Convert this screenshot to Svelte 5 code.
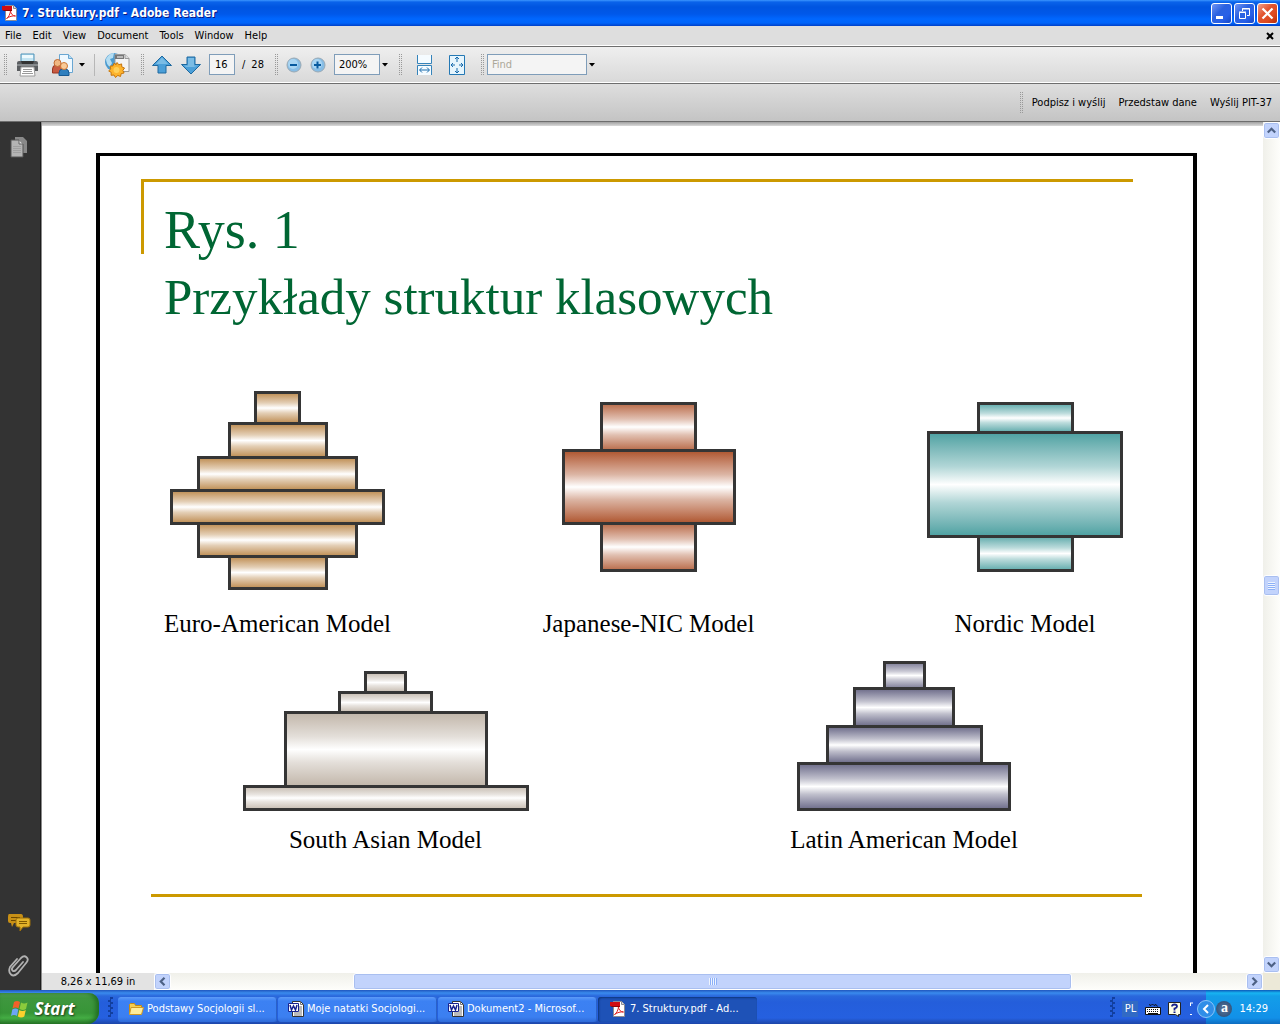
<script lang="ts">
    type Bar = [width: number, height: number, pale?: boolean];
    type Model = { name: string; tone: string; gap: number; bars: Bar[] };

    const menus = ["File", "Edit", "View", "Document", "Tools", "Window", "Help"];
    const actions = ["Podpisz i wyślij", "Przedstaw dane", "Wyślij PIT-37"];

    /** Each bar is [width, height, pale]; gap is the space above the caption. */
    const upper: Model[] = [
        {
            name: "Euro-American Model",
            tone: "tan",
            gap: 20,
            bars: [[47, 34], [100, 37], [161, 36], [215, 36], [161, 36], [100, 35]],
        },
        {
            name: "Japanese-NIC Model",
            tone: "rust",
            gap: 38,
            bars: [[97, 50, true], [174, 76], [97, 50, true]],
        },
        {
            name: "Nordic Model",
            tone: "teal",
            gap: 38,
            bars: [[97, 32, true], [196, 107], [97, 37, true]],
        },
    ];

    const lower: Model[] = [
        {
            name: "South Asian Model",
            tone: "stone",
            gap: 15,
            bars: [[43, 23, true], [95, 23, true], [204, 77], [286, 26, true]],
        },
        {
            name: "Latin American Model",
            tone: "slate",
            gap: 15,
            bars: [[43, 29, true], [102, 41], [157, 40], [214, 49]],
        },
    ];

    const tasks = [
        { icon: "folder", title: "Podstawy Socjologii sl..." },
        { icon: "word", title: "Moje natatki Socjologi..." },
        { icon: "word", title: "Dokument2 - Microsof..." },
        { icon: "pdf", title: "7. Struktury.pdf - Ad...", active: true },
    ];

    let pageNumber = $state("16");
    let zoom = $state("200%");
    let query = $state("");
</script>

{#snippet pdfIcon()}
    <svg width="16" height="16" viewBox="0 0 16 16" aria-hidden="true">
        <path d="M3.5.5h8l3 3v12h-11z" fill="#fff" stroke="#8b8b94" />
        <path d="M11.5.5v3h3" fill="#ddd" stroke="#8b8b94" />
        <path d="M4.500 13.500c2-1 4-5 4-8 0 3 2 5.500 5 5.500-3-.5-6 .5-9 2.500z" fill="none" stroke="#e02020" />
        <path d="M0 1h10v4H0z" fill="#d00c12" />
        <path d="M0 5h10v1H2z" fill="#8d0508" />
    </svg>
{/snippet}

{#snippet caret()}
    <svg width="6" height="4" viewBox="0 0 6 4" aria-hidden="true"><path d="M0 0h6L3 3.500z" fill="#000" /></svg>
{/snippet}

{#snippet chevron(turn: number)}
    <svg width="9" height="9" viewBox="0 0 9 9" aria-hidden="true">
        <path d="M.8 6.500l3.700-3.700 3.700 3.700" fill="none" stroke="#4d6185" stroke-width="2.200" transform="rotate({turn} 4.500 4.500)" />
    </svg>
{/snippet}

{#snippet figure(model: Model)}
    <figure class={model.tone}>
        <div class="stack" style="margin-bottom: {model.gap}px">
            {#each model.bars as [width, height, pale]}
                <div class="bar" class:pale style="width: {width}px; height: {height}px"></div>
            {/each}
        </div>
        <figcaption>{model.name}</figcaption>
    </figure>
{/snippet}

<div class="window">
    <header class="titlebar">
        {@render pdfIcon()}
        <h1>7. Struktury.pdf - Adobe Reader</h1>
        <div class="controls">
            <button aria-label="Minimize">
                <svg width="21" height="21" viewBox="0 0 21 21"><path d="M5 13h7v3H5z" fill="#fff" /></svg>
            </button>
            <button aria-label="Restore">
                <svg width="21" height="21" viewBox="0 0 21 21" fill="none" stroke="#fff">
                    <path d="M8.500 8V5.500h7v7H13M8 6h8" />
                    <path d="M5.500 9.500h6v6h-6zM5 9h7" />
                </svg>
            </button>
            <button class="close" aria-label="Close">
                <svg width="21" height="21" viewBox="0 0 21 21"><path d="M5.500 5.500l10 10m0-10l-10 10" stroke="#fff" stroke-width="2.200" /></svg>
            </button>
        </div>
    </header>

    <nav class="menubar">
        {#each menus as menu}
            <button>{menu}</button>
        {/each}
        <button class="close-doc" aria-label="Close document">
            <svg width="8" height="8" viewBox="0 0 8 8"><path d="M1 1l6 6m0-6l-6 6" stroke="#000" stroke-width="2" /></svg>
        </button>
    </nav>

    <div class="toolbar">
        <div class="group files">
            <span class="grip"></span>
            <button aria-label="Print">
                <svg width="24" height="24" viewBox="0 0 24 24">
                    <path d="M5 1h13v9H5z" fill="#c3e4f2" stroke="#4e93b9" />
                    <path d="M6 2h11v3H6z" fill="#edf9fd" />
                    <path d="M3 8h17q2 0 2 2v8H1v-8q0-2 2-2z" fill="#5a5d60" />
                    <path d="M1 11h21v2H1z" fill="#868a8d" />
                    <path d="M5 8h13l-1 3H6z" fill="#333" />
                    <path d="M5 14h13l1 9H4z" fill="#fff" stroke="#999" />
                    <path d="M7 16.500h9M7 18.500h9M6 20.500h11" stroke="#999" />
                </svg>
            </button>
            <div class="split share">
                <button aria-label="Collaborate">
                    <svg width="24" height="24" viewBox="0 0 24 24">
                        <path d="M8.500 1.500h9l4 4v14h-13z" fill="#eef8ff" stroke="#69a6d2" />
                        <path d="M17.500 1.500v4h4" fill="#b9dcf1" stroke="#69a6d2" />
                        <path d="M1.500 20v-4q0-4 4-4h2q4 0 4 4v4z" fill="#c85b42" stroke="#983521" />
                        <circle cx="6.500" cy="10" r="3.500" fill="#f0b782" stroke="#c16a31" />
                        <path d="M8 22.500V20q0-4 4-4h2q4 0 4 4v2.500z" fill="#2f7fbe" stroke="#175a93" />
                        <circle cx="13" cy="13" r="3.500" fill="#f8ca98" stroke="#cc7736" />
                    </svg>
                </button>
                <button aria-label="Collaborate options">{@render caret()}</button>
            </div>
            <span class="rule"></span>
            <button aria-label="Create PDF online">
                <svg width="26" height="26" viewBox="0 0 26 26">
                    <circle cx="10" cy="10" r="9" fill="#4b9bd0" />
                    <path d="M2 7q3-6 8-6l-1 5-3 1 2 4-2 4q-4-3-4-8z" fill="#b4ddf2" />
                    <path d="M11 2.500h10l4 4v13H14l-3-9z" fill="#f4f4f4" stroke="#999" />
                    <path d="M11 3h9v4h-9z" fill="#777" />
                    <path d="M13 5h6" stroke="#fff" />
                    <path d="M21 2.500v4h4" fill="#ddd" stroke="#999" />
                    <path d="M13 10.500l1.800 2.300 2.800-.9.200 3 2.700 1.100-1.600 2.400 1.200 2.600-2.900.6-.7 2.900-2.700-1.100L11.500 25.500l-1.500-2.500-2.900.3.100-2.900-2.500-1.500 2.100-2-.8-2.800 2.900-.1 1.100-2.700 2.200 1.400z" fill="#fdb32b" stroke="#c77409" />
                    <circle cx="12.500" cy="18" r="3" fill="#ffd05a" />
                </svg>
            </button>
        </div>
        <div class="group pages">
            <span class="grip"></span>
            <button aria-label="Previous page">
                <svg width="22" height="22" viewBox="0 0 22 22"><path d="M11 2l9.500 9.500H15V19H7v-7.500H1.500z" fill="#4b9fd8" stroke="#1e699f" /><path d="M11 3.500l6 6.500H5z" fill="#7abce5" /></svg>
            </button>
            <button aria-label="Next page">
                <svg width="22" height="22" viewBox="0 0 22 22"><path d="M11 20l9.500-9.500H15V3H7v7.500H1.500z" fill="#4b9fd8" stroke="#1e699f" /><path d="M8 4h6v7.500h4L14 13H6l-2-1.500h4z" fill="#7abce5" /></svg>
            </button>
            <input class="page-input" aria-label="Page number" bind:value={pageNumber} />
            <span class="total"><span>/</span><span>28</span></span>
        </div>
        <div class="group zooms">
            <span class="grip"></span>
            <button aria-label="Zoom out">
                <svg width="16" height="16" viewBox="0 0 16 16"><circle cx="8" cy="8" r="7" fill="#87bde5" stroke="#9aa9b4" /><circle cx="7" cy="7" r="5" fill="#a9d5f2" /><path d="M4 7h7v2H4z" fill="#075a9f" /></svg>
            </button>
            <button aria-label="Zoom in">
                <svg width="16" height="16" viewBox="0 0 16 16"><circle cx="8" cy="8" r="7" fill="#87bde5" stroke="#9aa9b4" /><circle cx="7" cy="7" r="5" fill="#a9d5f2" /><path d="M4 7h7v2H4zM6.500 4.500h2v7h-2z" fill="#075a9f" /></svg>
            </button>
            <div class="split tight">
                <input class="zoom-input" aria-label="Zoom level" bind:value={zoom} />
                <button aria-label="Zoom levels">{@render caret()}</button>
            </div>
        </div>
        <div class="group fits">
            <span class="grip"></span>
            <button aria-label="Fit width">
                <svg width="18" height="22" viewBox="0 0 18 22" fill="none">
                    <path d="M1.500 1v8.500h14V1" fill="#f5fbff" stroke="#3483ba" />
                    <path d="M1.500 21v-9.500h14V21" fill="#f5fbff" stroke="#3483ba" />
                    <path d="M4 16h9M6 13.500L3.500 16 6 18.500M11 13.500l2.500 2.500-2.500 2.500" stroke="#176aac" />
                </svg>
            </button>
            <button aria-label="Fit page">
                <svg width="18" height="22" viewBox="0 0 18 22" fill="none">
                    <path d="M1.500 1.500h15v19h-15z" fill="#e6f5fd" stroke="#2478b4" />
                    <path d="M9 3v5M9 14v5M3 11h4M11 11h4" stroke="#176aac" />
                    <path d="M7 5l2-2 2 2M7 17l2 2 2-2M5 9l-2 2 2 2M13 9l2 2-2 2" stroke="#176aac" />
                </svg>
            </button>
        </div>
        <div class="group finds">
            <span class="grip"></span>
            <div class="split tight">
                <input class="find-input" aria-label="Find" placeholder="Find" bind:value={query} />
                <button aria-label="Find options">{@render caret()}</button>
            </div>
        </div>
    </div>

    <div class="toolbar actions">
        <span class="grip"></span>
        {#each actions as action}
            <button>{action}</button>
        {/each}
    </div>

    <div class="workspace">
        <aside>
            <button aria-label="Pages">
                <svg width="20" height="22" viewBox="0 0 20 22">
                    <path d="M6 1h8l4 4v12H6z" fill="#898989" />
                    <path d="M2 4h8l4 4v13H2z" fill="#b4b4b4" stroke="#555" />
                    <path d="M10 4v4h4" fill="#ddd" stroke="#666" />
                    <path d="M4 10.500h8M4 12.500h8M4 14.500h8M4 16.500h8" stroke="#a0a0a0" />
                </svg>
            </button>
            <span class="grow"></span>
            <button aria-label="Comments">
                <svg width="24" height="20" viewBox="0 0 24 20">
                    <path d="M2 1h12q2 0 2 3v4q0 2-2 2H7l-2 4-1-4H3Q1 10 1 8V4q0-3 1-3z" fill="#c89016" />
                    <path d="M4 4.500h9M4 7.500h8" stroke="#6b4700" />
                    <path d="M11 5h10q2 0 2 2v5q0 2-2 2h-5l-3 4v-4h-2q-2 0-2-2V7q0-2 2-2z" fill="#e3b32a" stroke="#9d700b" />
                    <path d="M12 8.500h8M12 10.500h8" stroke="#805900" />
                </svg>
            </button>
            <button aria-label="Attachments">
                <svg width="24" height="26" viewBox="0 0 24 26">
                    <path d="M16 9l-7 8q-2 2-3.500.5T6 14l8-9q3-3 5.500-.8t0 5.300L11 20q-4 4-7 1.500T3 14l7-8" fill="none" stroke="#b2b2b2" stroke-width="1.800" stroke-linecap="round" />
                </svg>
            </button>
        </aside>

        <div class="document">
            <div class="viewport">
                <main class="slide">
                    <h2><span class="first">Rys. 1</span><span>Przykłady struktur klasowych</span></h2>
                    <div class="models upper">
                        {#each upper as model}
                            {@render figure(model)}
                        {/each}
                    </div>
                    <div class="models lower">
                        {#each lower as model}
                            {@render figure(model)}
                        {/each}
                    </div>
                    <hr />
                </main>
                <div class="scroll vertical">
                    <button aria-label="Scroll up">{@render chevron(0)}</button>
                    <div class="track before"></div>
                    <div class="thumb"><span></span></div>
                    <div class="track"></div>
                    <button aria-label="Scroll down">{@render chevron(180)}</button>
                </div>
            </div>
            <footer>
                <span class="size">8,26 x 11,69 in</span>
                <div class="scroll horizontal">
                    <button aria-label="Scroll left">{@render chevron(-90)}</button>
                    <div class="track before"></div>
                    <div class="thumb"><span></span></div>
                    <div class="track"></div>
                    <button aria-label="Scroll right">{@render chevron(90)}</button>
                </div>
                <span class="corner"></span>
            </footer>
        </div>
    </div>

    <div class="taskbar">
        <button class="start">
            <svg width="20" height="20" viewBox="0 0 20 20" aria-hidden="true">
                <path d="M4 3q3-2 6 0L8.500 9.500q-3-2-6 0z" fill="#f2602a" />
                <path d="M11 3.500q3 2 6.500 0L16 10q-3 2-6.500 0z" fill="#8acb3c" />
                <path d="M2.300 10.500q3-2 6 0L7 17q-3-2-6 0z" fill="#6da5f5" />
                <path d="M9.300 11q3 2 6.500 0l-1.500 6.500q-3 2-6.500 0z" fill="#fbd02d" />
            </svg>
            Start
        </button>
        <span class="dots"></span>
        <div class="tasks">
            {#each tasks as task}
                <button class:active={task.active}>
                    {#if task.icon === "folder"}
                        <svg width="16" height="16" viewBox="0 0 16 16" aria-hidden="true">
                            <path d="M1.500 13V3.500l1-1h4l1 2h6V7" fill="#f6ce50" stroke="#c58a15" />
                            <path d="M1.500 13.500L3 6.500h12.500l-2 7z" fill="#ffed9b" stroke="#d19a23" />
                        </svg>
                    {:else if task.icon === "word"}
                        <svg width="16" height="16" viewBox="0 0 16 16" aria-hidden="true">
                            <path d="M4.500.5h8l3 3v12h-11z" fill="#fff" stroke="#333" />
                            <path d="M12.500.5v3h3M11 6h3M11 8h3M11 10h3M6 12h8M6 14h8" fill="none" stroke="#777" />
                            <path d="M.5 2.500h10v8H.5z" fill="#fff" stroke="#17228e" />
                            <path d="M2 4l1.500 5 2-4 2 4L9 4" fill="none" stroke="#17228e" stroke-width="1.500" />
                        </svg>
                    {:else}
                        {@render pdfIcon()}
                    {/if}
                    {task.title}
                </button>
            {/each}
        </div>
        <span class="dots"></span>
        <div class="language">
            <button class="lang">PL</button>
            <button aria-label="Keyboard">
                <svg width="16" height="16" viewBox="0 0 16 16">
                    <path d="M4 3.500l2 1 1.500-1.500L9 4.500l2-1 1.500 2" fill="none" stroke="#111" />
                    <path d="M.5 6.500h15v7H.5z" fill="#fff" stroke="#111" />
                    <path d="M2 8.500h12M2 10.500h12" stroke="#111" stroke-dasharray="1 1" />
                    <path d="M3 12.500h10" stroke="#111" />
                </svg>
            </button>
            <button aria-label="Help">
                <svg width="14" height="16" viewBox="0 0 14 16">
                    <path d="M.5 1.500h12v12h-2v2l-3-2h-7z" fill="#ffffe8" stroke="#222" />
                    <path d="M4 5.500q0-2 2.500-2T9 5.500q0 1.200-2.500 2v2" fill="none" stroke="#17228e" stroke-width="1.800" />
                    <path d="M5.500 10.500h2V12h-2z" fill="#17228e" />
                </svg>
            </button>
            <svg width="4" height="14" viewBox="0 0 4 14" aria-hidden="true"><path d="M1 1h3M1.500 1v3M1 12.500h2" stroke="#fff" fill="none" /></svg>
        </div>
        <div class="tray">
            <button class="expand" aria-label="Show hidden icons">
                <svg width="18" height="18" viewBox="0 0 18 18">
                    <circle cx="9" cy="9" r="8.500" fill="#2f8ee8" stroke="#8cc4f8" />
                    <path d="M11 5L7 9l4 4" fill="none" stroke="#fff" stroke-width="2" />
                </svg>
            </button>
            <span class="avast">a</span>
            <time>14:29</time>
        </div>
    </div>
</div>

<style>
    :global(body) {
        margin: 0;
    }

    .window {
        display: flex;
        flex-direction: column;
        height: 100vh;
        overflow: hidden;
        font: 11px/14px "DejaVu Sans Condensed", "Liberation Sans", sans-serif;
        color: #000;
    }

    button {
        display: flex;
        align-items: center;
        justify-content: center;
        padding: 0;
        border: 0;
        background: none;
        font: inherit;
        color: inherit;
        white-space: nowrap;
    }

    svg {
        display: block;
        flex: none;
    }

    input {
        box-sizing: border-box;
        height: 21px;
        padding: 0 5px;
        border: 1px solid #7f9db9;
        background: #f4f4f4;
        font: inherit;
        color: #000;
    }

    input::placeholder {
        color: #aca899;
        opacity: 1;
    }

    .titlebar {
        display: flex;
        align-items: center;
        gap: 4px;
        height: 26px;
        padding: 0 2px;
        background: linear-gradient(#3c96ff, #0a63ea 2px, #0055e0 7px, #0058ea 14px, #0067ff 19px, #0064fa 23px, #0040c8 26px);
    }

    h1 {
        flex: 1;
        margin: 0;
        font-size: 12px;
        font-weight: bold;
        line-height: 16px;
        color: #fff;
        text-shadow: 1px 1px 0 #0a1883;
    }

    .controls {
        display: flex;
        gap: 2px;
    }

    .controls button {
        box-sizing: border-box;
        width: 21px;
        height: 21px;
        border: 1px solid #fff;
        border-radius: 3px;
        background: linear-gradient(135deg, #7195f5, #2b62e0 40%, #2860e8 70%, #1546c5);
    }

    .controls .close {
        background: linear-gradient(135deg, #f0a08a, #e2542f 40%, #dd4a20 70%, #b52c08);
    }

    .menubar {
        display: flex;
        align-items: center;
        gap: 11px;
        height: 19px;
        padding: 0 6px 0 5px;
        border-bottom: 1px solid #fff;
        background: #dedede;
    }

    .close-doc {
        margin-left: auto;
    }

    .toolbar {
        display: flex;
        align-items: center;
        gap: 10px;
        height: 35px;
        padding-left: 3px;
        border-top: 1px solid #6e6e6e;
        border-bottom: 1px solid #fff;
        background: linear-gradient(#efefef, #d9d9d9);
    }

    .toolbar.actions {
        justify-content: flex-end;
        gap: 13px;
        height: 37px;
        padding-right: 8px;
        border-bottom-color: #6e6e6e;
        background: linear-gradient(#dedede, #c4c4c4);
    }

    .actions .grip {
        margin-right: -4px;
    }

    .group,
    .split {
        display: flex;
        align-items: center;
    }

    .files {
        gap: 9px;
    }

    .split {
        gap: 4px;
    }

    .share {
        margin-left: 2px;
    }

    .tight {
        gap: 2px;
    }

    .pages {
        gap: 7px;
    }

    .zooms {
        gap: 8px;
    }

    .fits {
        gap: 14px;
        padding-right: 4px;
    }

    .finds {
        gap: 3px;
    }

    .grip {
        width: 4px;
        height: 22px;
        background: conic-gradient(#999 25%, transparent 0) 0 0 / 2px 2px;
    }

    .rule {
        width: 1px;
        height: 22px;
        background: #b7b7b7;
    }

    .page-input {
        width: 26px;
    }

    .zoom-input {
        width: 46px;
        padding: 0 4px;
    }

    .find-input {
        width: 100px;
        padding: 0 4px;
    }

    .total {
        display: flex;
        gap: 6px;
    }

    .workspace {
        display: flex;
        flex: 1;
        min-height: 0;
    }

    aside {
        display: flex;
        flex-direction: column;
        align-items: center;
        gap: 20px;
        width: 41px;
        box-sizing: border-box;
        padding: 14px 2px 11px 0;
        border-right: 1px solid #1c1c1c;
        background: #333;
    }

    .grow {
        flex: 1;
    }

    .document {
        display: flex;
        flex: 1;
        flex-direction: column;
        min-width: 0;
        border-left: 1px solid #8a8a8a;
    }

    .viewport {
        display: flex;
        flex: 1;
        min-height: 0;
        overflow: hidden;
        background: linear-gradient(#a0a0a0, #dadada 4px, #fff 4px);
    }

    .slide {
        display: flex;
        flex: 1;
        flex-direction: column;
        margin: 31px 66px 0 54px;
        border: solid #000;
        border-width: 3px 4px 0;
    }

    h2 {
        margin: 23px 60px 60px 41px;
        padding: 18px 0 0 23px;
        background:
            linear-gradient(#c90, #c90) 0 0 / 100% 3px no-repeat,
            linear-gradient(#c90, #c90) 0 0 / 3px 75px no-repeat;
        font: 51px/67px "Liberation Serif", serif;
        color: #063;
    }

    h2 span {
        display: block;
    }

    h2 .first {
        font-size: 54px;
    }

    .models {
        display: grid;
        align-items: end;
        margin-bottom: 23px;
    }

    .upper {
        grid-template-columns: 315fr 427fr 326fr;
        padding: 0 5px 0 20px;
    }

    .lower {
        grid-template-columns: 531fr 506fr;
        margin-bottom: 40px;
        padding: 0 36px 0 20px;
    }

    figure {
        margin: 0;
        text-align: center;
    }

    figcaption {
        font: 25px/28px "Liberation Serif", serif;
    }

    .stack {
        display: flex;
        flex-direction: column;
        align-items: center;
    }

    .bar {
        --edge: var(--tone);
        box-sizing: border-box;
        border: 3px solid #353535;
        background: linear-gradient(var(--edge), color-mix(in srgb, var(--edge), #fff 55%) 32%, #fff 50%, color-mix(in srgb, var(--edge), #fff 55%) 68%, var(--edge));
    }

    .bar.pale {
        --edge: color-mix(in srgb, var(--tone), #fff 15%);
    }

    .bar + .bar {
        margin-top: -3px;
    }

    .tan {
        --tone: #c2945c;
    }

    .rust {
        --tone: #b05a34;
    }

    .teal {
        --tone: #50a3a4;
    }

    .stone {
        --tone: #c3b8ac;
    }

    .slate {
        --tone: #74738f;
    }

    hr {
        width: auto;
        height: 3px;
        margin: 0 51px;
        border: 0;
        background: #c90;
    }

    .scroll {
        display: flex;
    }

    .vertical {
        flex-direction: column;
        width: 17px;
        background: linear-gradient(90deg, #f0f0ea, #fefefb);
    }

    .horizontal {
        flex: 1;
        background: linear-gradient(#f0f0ea, #fefefb);
    }

    .scroll button,
    .thumb {
        box-sizing: border-box;
        border: 1px solid #fff;
        border-radius: 3px;
        background: #c2d3fc;
        box-shadow: inset 0 0 0 1px #a9bff0;
    }

    .scroll button {
        width: 17px;
        height: 17px;
    }

    .thumb {
        display: flex;
        align-items: center;
        justify-content: center;
    }

    .vertical .track {
        flex: 360;
    }

    .vertical .track.before {
        flex: 436;
    }

    .horizontal .track {
        flex: 174;
    }

    .horizontal .track.before {
        flex: 182;
    }

    .vertical .thumb {
        height: 21px;
    }

    .vertical .thumb span {
        width: 7px;
        height: 8px;
        background: repeating-linear-gradient(#eef4fe 0 1px, #8cb0f8 1px 2px);
    }

    .horizontal .thumb {
        flex: 717;
    }

    .horizontal .thumb span {
        width: 8px;
        height: 7px;
        background: repeating-linear-gradient(90deg, #eef4fe 0 1px, #8cb0f8 1px 2px);
    }

    footer {
        display: flex;
        height: 17px;
        background: #e3e3e3;
    }

    .size {
        width: 112px;
        line-height: 17px;
        text-align: center;
    }

    .corner {
        width: 17px;
        background: #ece9d8;
    }

    .taskbar {
        display: flex;
        align-items: center;
        height: 34px;
        background: linear-gradient(#1f56bd, #3a8bee 3px, #2a68dc 6px, #245edb 12px, #2560e0 28px, #1c46a8);
        color: #fff;
    }

    .start {
        align-self: flex-end;
        gap: 4px;
        width: 99px;
        height: 31px;
        padding-right: 14px;
        box-sizing: border-box;
        border-radius: 0 10px 12px 0;
        background: linear-gradient(#5aa55a, #3f973f 5px, #379537 20px, #44ad44 25px, #2a7a2a);
        box-shadow: inset -3px 0 5px #206b20;
        font: italic bold 17px/20px "Open Sans", "Liberation Sans", sans-serif;
        text-shadow: 1px 1px 2px #1b3a1b;
    }

    .dots {
        width: 5px;
        height: 20px;
        margin: 0 5px 0 9px;
        background: conic-gradient(#123f9e 25%, transparent 0 50%, #123f9e 0 75%, transparent 0) 0 0 / 5px 5px;
    }

    .tasks {
        display: flex;
        flex: 1;
        gap: 1px;
    }

    .tasks button {
        justify-content: flex-start;
        gap: 3px;
        width: 159px;
        height: 25px;
        margin-top: 4px;
        padding-left: 10px;
        border-radius: 3px;
        background: linear-gradient(#5d9bf8, #3c81f3 4px, #3b7ff1 20px, #2f6bd8);
        box-shadow: inset -1px 0 #2a62c8;
        overflow: hidden;
    }

    .tasks .active {
        gap: 4px;
        padding-left: 12px;
        background: #1e52b7;
        box-shadow: inset 1px 1px 2px #0e3579;
    }

    .language {
        display: flex;
        align-items: center;
        gap: 7px;
        padding: 4px 5px 0 2px;
    }

    .lang {
        width: 16px;
        height: 16px;
        background: #316ac5;
    }

    .tray {
        display: flex;
        align-items: center;
        gap: 1px;
        align-self: stretch;
        margin-left: 8px;
        padding: 4px 12px 0 0;
        background: linear-gradient(#0c59b9, #18b5f2 3px, #139ee9 6px, #1290e8 28px, #0d6cc0);
    }

    .expand {
        margin-left: -9px;
    }

    .avast {
        width: 16px;
        height: 16px;
        margin-right: 6px;
        border-radius: 50%;
        background: radial-gradient(#5a7aa0, #24466f);
        font: bold 14px/14px "Liberation Serif", serif;
        text-align: center;
    }
</style>
